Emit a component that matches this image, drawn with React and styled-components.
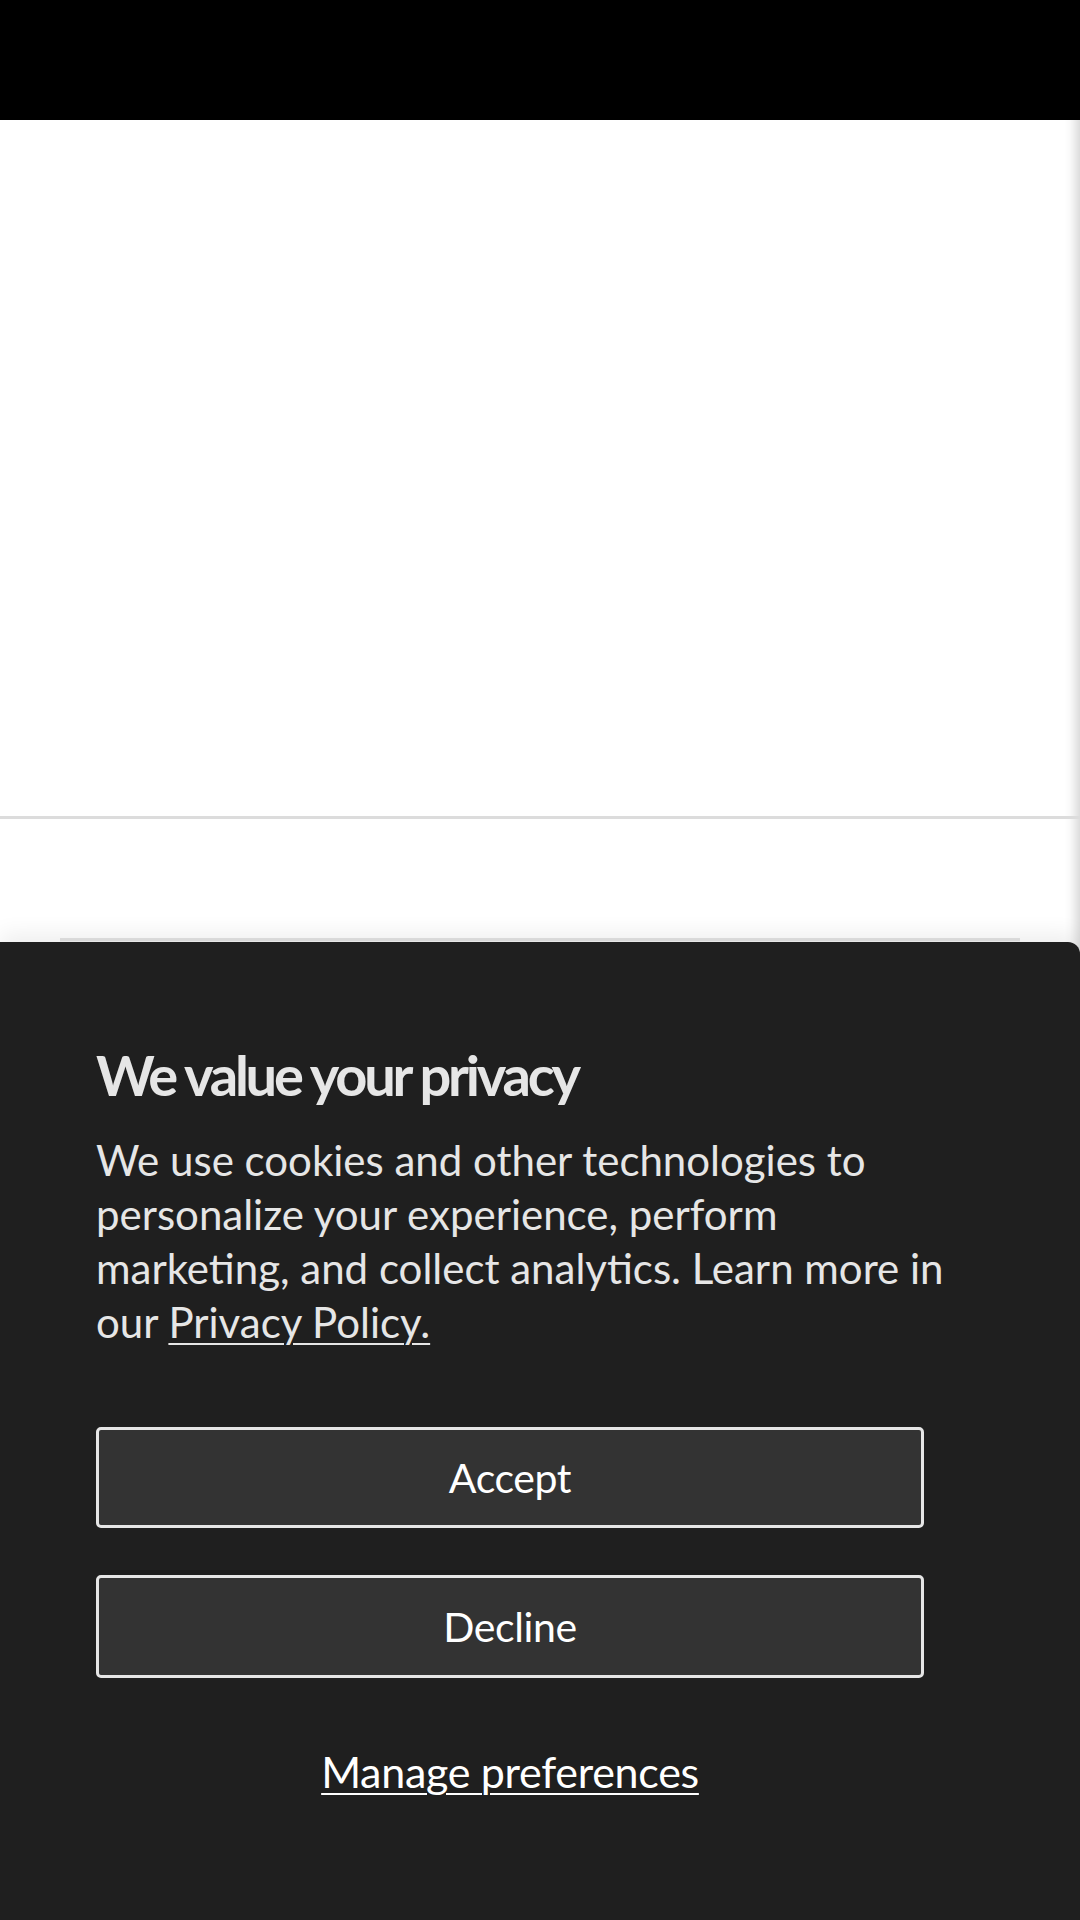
import React from "react";
import styled, { createGlobalStyle } from "styled-components";

const GlobalStyle = createGlobalStyle`
  html, body {
    margin: 0;
    padding: 0;
    background: #ffffff;
  }
  body {
    font-family: Lato, "Noto Sans", "Liberation Sans", sans-serif;
  }
  * {
    box-sizing: border-box;
  }
`;

const Page = styled.div`
  position: relative;
  width: 1080px;
  height: 1920px;
  overflow: hidden;
  background: #ffffff;
  box-shadow: inset -14px 0 12px -10px rgba(0, 0, 0, 0.18);
`;

const TopBar = styled.header`
  height: 120px;
  background: #000000;
`;

const Hero = styled.section`
  height: 696px;
`;

const Rule = styled.hr`
  margin: 0;
  border: 0;
  height: 3px;
  background: #dcdcdc;
`;

const CardRow = styled.div`
  padding: 119px 60px 0;
`;

const Card = styled.div`
  height: 200px;
  border-top: 3px solid #e4e4e4;
  background: #f4f4f4;
`;

const Banner = styled.div`
  position: absolute;
  top: 942px;
  left: 0;
  right: 0;
  bottom: 0;
  background: #1f1f1f;
  border-top-right-radius: 12px;
  box-shadow: 0 -8px 22px rgba(0, 0, 0, 0.07);
  padding: 101px 96px 0 96px;
  display: flex;
  flex-direction: column;
`;

const Title = styled.h2`
  margin: 0;
  color: #e6e6e6;
  font-family: Lato, "Noto Sans", sans-serif;
  font-weight: 700;
  font-size: 56px;
  line-height: 64px;
  letter-spacing: -3.2px;
`;

const Body = styled.p`
  margin: 26px 0 0;
  width: 862px;
  color: #e6e6e6;
  font-size: 42px;
  line-height: 54px;
  letter-spacing: 0;
`;

const TextLink = styled.a`
  color: ${(p) => p.color || "#e6e6e6"};
  text-decoration: underline;
  text-decoration-thickness: 2px;
  text-underline-offset: 5px;
  cursor: pointer;
`;

const Actions = styled.div`
  margin-top: 78px;
  width: 828px;
  display: flex;
  flex-direction: column;
  gap: 47px;
  align-items: stretch;
`;

const Button = styled.button`
  height: ${(p) => p.h || 101}px;
  background: #333333;
  border: 3px solid #e6e6e6;
  border-radius: 5px;
  color: #ffffff;
  font-family: Lato, "Noto Sans", sans-serif;
  font-size: 41px;
  letter-spacing: -0.4px;
  cursor: pointer;
`;

const Manage = styled.div`
  margin-top: 20px;
  text-align: center;
  font-size: 43px;
  line-height: 54px;
  letter-spacing: -0.3px;
`;

export default function App() {
  return (
    <>
      <GlobalStyle />
      <Page>
        <TopBar />
        <Hero />
        <Rule />
        <CardRow>
          <Card />
        </CardRow>
        <Banner>
          <Title>We value your privacy</Title>
          <Body>
            We use cookies and other technologies to personalize your
            experience, perform marketing, and collect analytics. Learn more
            in our <TextLink>Privacy Policy.</TextLink>
          </Body>
          <Actions>
            <Button h={101}>Accept</Button>
            <Button h={103}>Decline</Button>
            <Manage>
              <TextLink color="#ffffff">Manage preferences</TextLink>
            </Manage>
          </Actions>
        </Banner>
      </Page>
    </>
  );
}
